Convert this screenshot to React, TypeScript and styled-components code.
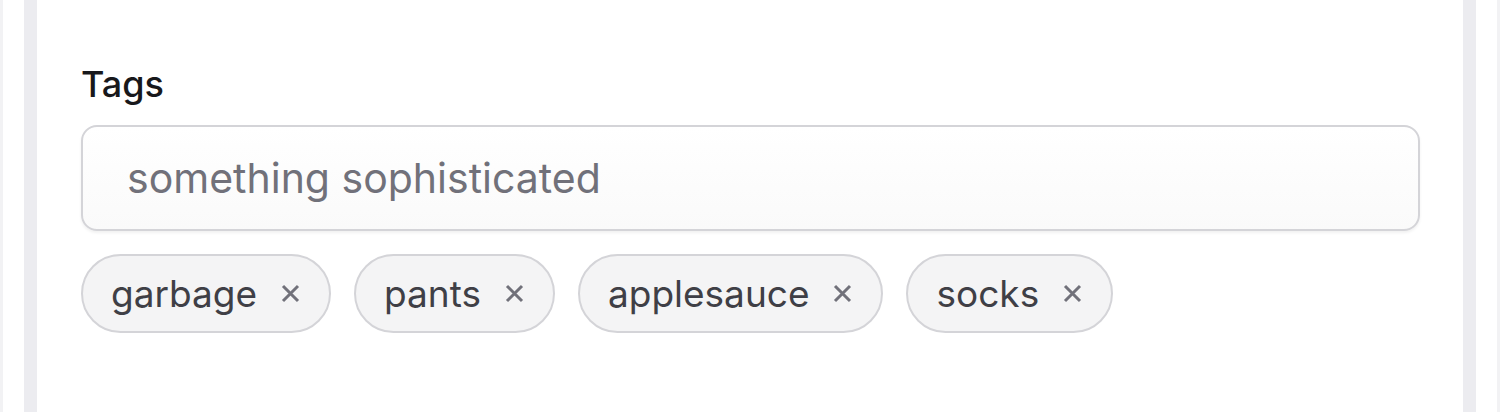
import styled, { createGlobalStyle } from 'styled-components';

const GlobalStyle = createGlobalStyle`
  html, body {
    margin: 0;
    padding: 0;
    background: #ffffff;
  }
  body {
    font-family: Inter, "Noto Sans", sans-serif;
    -webkit-font-smoothing: antialiased;
  }
`;

const Page = styled.div`
  height: 412px;
  overflow: hidden;
  box-sizing: border-box;
  padding: 0 21px;
  border-left: 3px solid #f2f2f4;
  border-right: 3px solid #f2f2f4;
`;

const Frame = styled.div`
  height: 100%;
  box-sizing: border-box;
  border-left: 13px solid #ececf0;
  border-right: 13px solid #ececf0;
  background: #ffffff;
`;

const Card = styled.div`
  padding: 62px 43px 0 44px;
`;

const Label = styled.label`
  display: block;
  font-size: 36px;
  line-height: 44px;
  font-weight: 500;
  color: #18181b;
`;

const Input = styled.input`
  display: block;
  box-sizing: border-box;
  width: 100%;
  height: 106px;
  margin-top: 19px;
  padding: 0 44px;
  border: 2px solid #d4d4d8;
  border-radius: 16px;
  background: linear-gradient(#ffffff, #fafafa);
  box-shadow: 0 2px 3px rgba(0, 0, 0, 0.06);
  font-family: inherit;
  font-size: 41px;
  color: #18181b;
  outline: none;

  &::placeholder {
    color: #71717a;
  }
`;

const TagList = styled.div`
  display: flex;
  flex-wrap: wrap;
  gap: 23px;
  margin-top: 23px;
`;

const Tag = styled.span`
  display: inline-flex;
  align-items: center;
  gap: 24px;
  box-sizing: border-box;
  height: 79px;
  padding: 0 29px 0 28px;
  border: 2px solid #d4d4d8;
  border-radius: 999px;
  background: #f4f4f5;
  font-size: 37px;
  color: #3f3f46;
`;

const RemoveButton = styled.button`
  display: flex;
  align-items: center;
  justify-content: center;
  padding: 0;
  border: none;
  background: none;
  color: #71717a;
  cursor: pointer;

  svg {
    width: 19px;
    height: 19px;
  }
`;

const tags = ['garbage', 'pants', 'applesauce', 'socks'];

export default function App() {
  return (
    <>
      <GlobalStyle />
      <Page>
        <Frame>
          <Card>
            <Label htmlFor="tags">Tags</Label>
            <Input id="tags" placeholder="something sophisticated" />
            <TagList>
              {tags.map((tag) => (
                <Tag key={tag}>
                  {tag}
                  <RemoveButton aria-label={`Remove ${tag}`}>
                    <svg viewBox="0 0 19 19" fill="none" stroke="currentColor" strokeWidth="3" strokeLinecap="butt">
                      <path d="M2 2L17 17M17 2L2 17" />
                    </svg>
                  </RemoveButton>
                </Tag>
              ))}
            </TagList>
          </Card>
        </Frame>
      </Page>
    </>
  );
}
